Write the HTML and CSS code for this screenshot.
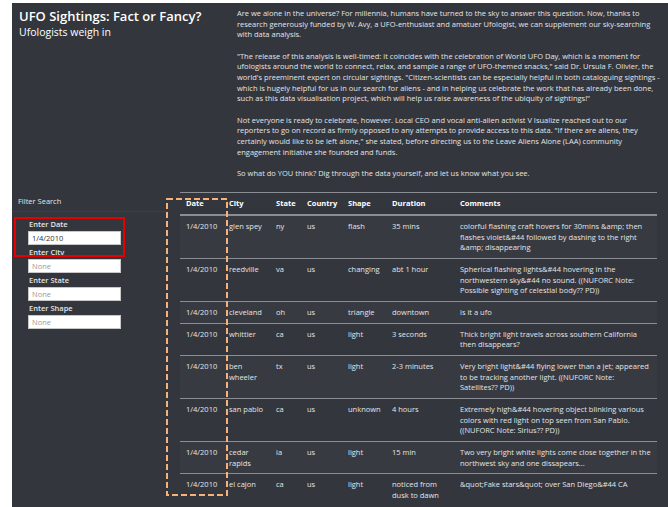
FILE: index.html
```html
<!DOCTYPE html>
<html lang="en">
<head>
<meta charset="utf-8">
<title>UFO Sightings: Fact or Fancy?</title>
<link rel="stylesheet" href="styles.css">
</head>
<body>
<div class="page">
  <header class="top">
    <div class="brand">
      <h1 class="brand-title">UFO Sightings: Fact or Fancy?</h1>
      <h2 class="brand-sub">Ufologists weigh in</h2>
    </div>
    <div class="intro">
      <p>Are we alone in the universe? For millennia, humans have turned to the sky to answer this question. Now, thanks to research generously funded by W. Avy, a UFO-enthusiast and amatuer Ufologist, we can supplement our sky-searching with data analysis.</p>
      <p>"The release of this analysis is well-timed: it coincides with the celebration of World UFO Day, which is a moment for ufologists around the world to connect, relax, and sample a range of UFO-themed snacks," said Dr. Ursula F. Olivier, the world's preeminent expert on circular sightings. "Citizen-scientists can be especially helpful in both cataloguing sightings - which is hugely helpful for us in our search for aliens - and in helping us celebrate the work that has already been done, such as this data visualisation project, which will help us raise awareness of the ubiquity of sightings!"</p>
      <p>Not everyone is ready to celebrate, however. Local CEO and vocal anti-alien activist V Isualize reached out to our reporters to go on record as firmly opposed to any attempts to provide access to this data. "If there are aliens, they certainly would like to be left alone," she stated, before directing us to the Leave Aliens Alone (LAA) community engagement initiative she founded and funds.</p>
      <p>So what do YOU think? Dig through the data yourself, and let us know what you see.</p>
    </div>
  </header>

  <main class="content">
    <aside class="filters">
      <div class="filters-head">Filter Search</div>
      <div class="filter-list">
        <div class="field">
          <label class="field-label" for="f-date">Enter Date</label>
          <input class="field-input" id="f-date" type="text" value="1/4/2010">
        </div>
        <div class="field">
          <label class="field-label" for="f-city">Enter City</label>
          <input class="field-input" id="f-city" type="text" placeholder="None">
        </div>
        <div class="field">
          <label class="field-label" for="f-state">Enter State</label>
          <input class="field-input" id="f-state" type="text" placeholder="None">
        </div>
        <div class="field">
          <label class="field-label" for="f-shape">Enter Shape</label>
          <input class="field-input" id="f-shape" type="text" placeholder="None">
        </div>
      </div>
      <div class="mark-red"></div>
    </aside>

    <section class="results">
      <table class="ufo-table">
        <thead>
          <tr>
            <th class="c-date">Date</th>
            <th class="c-city">City</th>
            <th class="c-state">State</th>
            <th class="c-country">Country</th>
            <th class="c-shape">Shape</th>
            <th class="c-dur">Duration</th>
            <th class="c-comm">Comments</th>
          </tr>
        </thead>
        <tbody>
          <tr><td>1/4/2010</td><td>glen spey</td><td>ny</td><td>us</td><td>flash</td><td>35 mins</td><td>colorful flashing craft hovers for 30mins &amp;amp; then flashes violet&amp;#44 followed by dashing to the right &amp;amp; disappearing</td></tr>
          <tr><td>1/4/2010</td><td>reedville</td><td>va</td><td>us</td><td>changing</td><td>abt 1 hour</td><td>Spherical flashing lights&amp;#44 hovering in the northwestern sky&amp;#44 no sound. ((NUFORC Note: Possible sighting of celestial body?? PD))</td></tr>
          <tr><td>1/4/2010</td><td>cleveland</td><td>oh</td><td>us</td><td>triangle</td><td>downtown</td><td>is it a ufo</td></tr>
          <tr><td>1/4/2010</td><td>whittier</td><td>ca</td><td>us</td><td>light</td><td>3 seconds</td><td>Thick bright light travels across southern California then disappears?</td></tr>
          <tr><td>1/4/2010</td><td>ben wheeler</td><td>tx</td><td>us</td><td>light</td><td>2-3 minutes</td><td>Very bright light&amp;#44 flying lower than a jet; appeared to be tracking another light. ((NUFORC Note: Satellites?? PD))</td></tr>
          <tr><td>1/4/2010</td><td>san pablo</td><td>ca</td><td>us</td><td>unknown</td><td>4 hours</td><td>Extremely high&amp;#44 hovering object blinking various colors with red light on top seen from San Pablo. ((NUFORC Note: Sirius?? PD))</td></tr>
          <tr><td>1/4/2010</td><td>cedar rapids</td><td>ia</td><td>us</td><td>light</td><td>15 min</td><td>Two very bright white lights come close together in the northwest sky and one dissapears...</td></tr>
          <tr><td>1/4/2010</td><td>el cajon</td><td>ca</td><td>us</td><td>light</td><td>noticed from dusk to dawn</td><td>&amp;quot;Fake stars&amp;quot; over San Diego&amp;#44 CA</td></tr>
        </tbody>
      </table>
      <svg class="mark-dash" viewBox="0 0 62 298" preserveAspectRatio="none" aria-hidden="true">
        <rect x="1" y="1" width="60" height="296" fill="none" stroke="#f7b27a" stroke-width="2" stroke-dasharray="6 3"/>
      </svg>
    </section>
  </main>
</div>
</body>
</html>
```

FILE: styles.css
```css
html, body {
  margin: 0;
  padding: 0;
  background: #ffffff;
}

body {
  font-family: "Open Sans", "Liberation Sans", sans-serif;
  overflow: hidden;
}

.page {
  margin: 3px 0 0 12px;
  height: 504px;
  background: #33363d;
  color: #e4e5e7;
  font-size: 7.5px;
  line-height: 10.67px;
}

.top {
  display: flex;
}

.brand {
  width: 218px;
  padding: 5px 0 0 7px;
}

.brand-title {
  margin: 0;
  font-size: 13px;
  line-height: 16px;
  font-weight: 600;
  color: #ffffff;
}

.brand-sub {
  margin: 2px 0 0;
  font-size: 10.5px;
  line-height: 13px;
  font-weight: 400;
  color: #ffffff;
}

.intro {
  width: 424px;
  padding-top: 5px;
}

.intro p {
  margin: 0 0 10.67px;
}

.content {
  display: flex;
  margin-top: 0;
}

.filters {
  position: relative;
  width: 154px;
  padding-top: 5px;
}

.filters-head {
  padding: 2px 6px 4px;
  border-bottom: 1px solid #3b3e45;
  color: #e4e5e7;
}

.filter-list {
  padding: 6px 0 0 16px;
}

.field {
  display: flex;
  flex-direction: column;
  align-items: flex-start;
}

.field-label {
  font-weight: 600;
  height: 13px;
  line-height: 12px;
  padding-left: 1px;
}

.field-input {
  box-sizing: border-box;
  width: 93px;
  height: 14px;
  margin: 0 0 1px;
  padding: 0 3px;
  border: 1px solid #c8c8c8;
  background: #ffffff;
  font-family: "Open Sans", "Liberation Sans", sans-serif;
  font-size: 7.5px;
  color: #333333;
  outline: none;
}

.field-input::placeholder {
  color: #9a9a9a;
}

.mark-red {
  position: absolute;
  left: 2px;
  top: 28px;
  width: 107px;
  height: 36px;
  border: 2px solid #e60000;
}

.results {
  position: relative;
  padding: 3px 0 0 14px;
}

.ufo-table {
  width: 477px;
  table-layout: fixed;
  border-collapse: collapse;
  border-top: 1px solid #8a8d93;
  color: #e4e5e7;
}

.ufo-table th,
.ufo-table td {
  padding: 5px 4px 5px 6px;
  text-align: left;
  vertical-align: top;
}

.ufo-table th {
  font-weight: 700;
  color: #ffffff;
  border-bottom: 2px solid #8a8d93;
}

.ufo-table td {
  border-top: 1px solid #8a8d93;
}

.ufo-table tbody tr:nth-child(odd) {
  background: rgba(255, 255, 255, 0.025);
}

.c-date { width: 33px; }
.c-city { width: 37px; }
.c-state { width: 21px; }
.c-country { width: 31px; }
.c-shape { width: 34px; }
.c-dur { width: 58px; }
.c-comm { width: 193px; }

.mark-dash {
  position: absolute;
  left: 0;
  top: 9px;
  width: 62px;
  height: 298px;
}
```
